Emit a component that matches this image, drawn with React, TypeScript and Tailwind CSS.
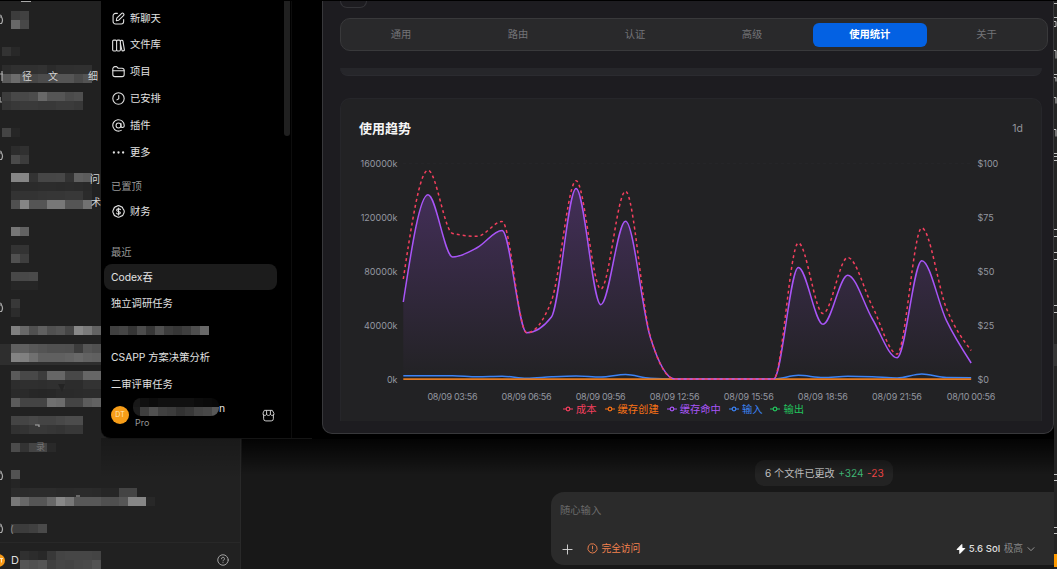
import type { ReactNode } from "react";

type Cells = [row: number, col: number, shades: string];

/* Redaction mosaic: each pair of hex digits is the grey of one 9px cell, ".." leaves a gap. */
const sidebarCells: Cells[] = [
  [1, 1, "3c41"], [2, 1, "6848"], [5, 0, "3328"],
  [7, 0, "2c303030322b2f2f3030"], [8, 0, "5a6c56464c4c55554a53"],
  [10, 0, "3c48484c6855554b4f"], [11, 0, "34383a3a38383b3b38"],
  [14, 0, "4426"], [16, 1, "2c30"], [17, 1, "4a3c"],
  [19, 1, "86863346464733605c"], [20, 1, "2a2b2b2c2c2b2c2b29"], [21, 1, "33333335363638382b"],
  [22, 1, "508555557878555572"],
  [25, 1, "7662"], [27, 1, "3333"], [28, 1, "503e"], [30, 1, "48484a"], [31, 1, "262626"],
  [33, 1, "38"], [34, 1, "2c"],
  [36, 1, "80685060505546887a62"], [38, 1, "6060585450504f3c5550"], [39, 1, "83807060606063686260"],
  [41, 1, "5a48483c666648486666"], [42, 1, "2d2f2f2e30302c2c3333"], [43, 1, "2a2a2726272a2a2b2c2c"],
  [44, 1, "5c444444706c44445c62"], [46, 1, "4444484444484c4c"], [47, 1, "3133383836343838"],
  [49, 1, "4b33444429"], [52, 1, "52"], [53, 1, "25"],
  [54, 1, "2b2b2c2c2c2a2a2b2b2a26264444"], [55, 1, "78685656688878585858504f56868628".slice(0, 26) + "868628"],
  [58, 1, "3c3c404a"], [61, 2, "302c28384446464644"], [62, 2, "555055404644484a52"],
];

function Mosaic({ rows, width, height, x = 0, y = 0 }: { rows: Cells[]; width: number; height: number; x?: number; y?: number }) {
  return (
    <svg width={width} height={height} viewBox={`${x} ${y} ${width} ${height}`} shapeRendering="crispEdges" aria-hidden="true">
      {rows.flatMap(([r, c, shades]) =>
        (shades.match(/../g) ?? []).map((s, i) =>
          s === ".." ? null : (
            <rect key={`${r}-${c + i}`} x={2 + 9 * (c + i)} y={2 + 9 * r} width={9} height={9} fill={`#${s}${s}${s}`} />
          ),
        ),
      )}
    </svg>
  );
}

function Icon({ children, size = 13, stroke = 2 }: { children: ReactNode; size?: number; stroke?: number }) {
  return (
    <svg width={size} height={size} viewBox="0 0 24 24" fill="none" stroke="currentColor" strokeWidth={stroke} strokeLinecap="round" strokeLinejoin="round" className="shrink-0">
      {children}
    </svg>
  );
}

const nav: [string, ReactNode][] = [
  ["新聊天", <><path d="M10 2.500H6.500a4.500 4.500 0 0 0-4.500 4.500v10.500A4.500 4.500 0 0 0 6.500 22h10.500a4.500 4.500 0 0 0 4.500-4.500V14" /><path d="M8 16l.8-4.500 8.700-8.700a2.600 2.600 0 0 1 3.700 3.700L12.500 15.200z" /></>],
  ["文件库", <><rect x="1.200" y="2" width="7.300" height="20" rx="2" /><path d="M8.500 4a2 2 0 0 1 2-2h3a2 2 0 0 1 2 2v16a2 2 0 0 1-2 2h-3a2 2 0 0 1-2-2" /><path d="M15.500 4.500a2 2 0 0 1 1.500-2l1-.1a2 2 0 0 1 2.200 1.600l2.600 15.500a2 2 0 0 1-1.500 2.300l-.8.1a2 2 0 0 1-2.300-1.500L15.500 8" /></>],
  ["项目", <><path d="M1.500 7a4 4 0 0 1 4-4h3l3 3h7a4 4 0 0 1 4 4v7.500a4 4 0 0 1-4 4h-13a4 4 0 0 1-4-4z" /><path d="M1.500 10.500h21" /></>],
  ["已安排", <><circle cx="12" cy="12" r="10.500" /><path d="M12.500 6.500v6l-3.500 2" /></>],
  ["插件", <><circle cx="12" cy="12" r="4.500" /><path d="M16.500 8v5a3 3 0 0 0 6-1A10.500 10.500 0 1 0 17 21" /></>],
  ["更多", <g fill="currentColor" stroke="none"><circle cx="3.500" cy="12" r="2.100" /><circle cx="12" cy="12" r="2.100" /><circle cx="20.500" cy="12" r="2.100" /></g>],
];

function AppSidebar() {
  return (
    <aside className="relative flex h-full w-[241px] shrink-0 flex-col justify-end overflow-hidden border-r border-[#292929] bg-[#212121]">
      <div className="flex h-[27px] items-center justify-between border-t border-[#282828] pr-[11px] pt-[8px] text-[#a0a0a0]">
        <div className="flex items-center">
          <svg width="5" height="13" viewBox="0 0 5 13"><circle cx="-1.500" cy="6.500" r="6.500" fill="#f79a18" /><path d="M0 4.500h3M1.500 4.500v4" stroke="#ffe6bd" /></svg>
          <span className="ml-[6px] text-[11px] text-[#dedede]">D</span>
        </div>
        <Icon size={12}><circle cx="12" cy="12" r="10.500" /><path d="M9 9.500a3 3 0 1 1 4 2.800c-.7.3-1 .7-1 1.500M12 17.300v.2" /></Icon>
      </div>
      <div className="absolute top-[344px] left-0 h-[21px] w-[101px] bg-[#2e2e2e]" />
      <div className="absolute inset-0"><Mosaic rows={sidebarCells} width={241} height={569} /></div>
      <div className="absolute inset-0 text-[10px] leading-[15px] text-[#d4d4d4]">
        <span className="absolute top-[69px] left-[22px] w-[10px]">径</span>
        <span className="absolute top-[69px] left-[48px] w-[10px]">文</span>
        <span className="absolute top-[69px] left-[88px] w-[10px]">细</span>
        <span className="absolute top-[172px] left-[90px] w-[10px]">问</span>
        <span className="absolute top-[195px] left-[91px] w-[10px]">术</span>
        <span className="absolute top-[439px] left-[36px] text-[9px] text-[#777]">录</span>
        <span className="absolute top-[522px] left-[10px] text-[#888]">(</span>
      </div>
      <svg className="absolute inset-0" width="100" height="569" fill="none" stroke="#a8a8a8" strokeWidth="1.200">
        {[20, 156, 308, 476, 529].map((y) => (
          <path key={y} d={`M0 ${y - 3}h1.500q2 3 0 6.500h-1.500M0 ${y - 5}q1.500 0 1.500 2`} />
        ))}
        <path d="M0 74h3M2 71v10M0 97v5h2M21 1.500h10M35 425h4v2M76 496h4" />
        <path d="M58 384h7l-3 8z" fill="#242424" stroke="none" />
      </svg>
    </aside>
  );
}

function Composer() {
  return (
    <main className="flex min-w-0 flex-1 flex-col items-end justify-end bg-[#181818] pr-[3px] pb-[4px]">
      <div className="mr-[161px] flex h-[26px] w-[138px] items-center gap-[3.500px] rounded-[9px] bg-[#232323] pt-[2px] pl-[10px] text-[10.100px] text-[#c6c6c6]">
        <span>6 个文件已更改</span><span className="text-[#40b976]">+324</span><span className="text-[#ee4545]">-23</span>
      </div>
      <div className="mt-[6px] flex h-[73px] w-[503px] flex-col justify-between rounded-l-[13px] bg-[#2b2b2b] pt-[10px] pr-[19px] pb-[8px] pl-[9px]">
        <div className="text-[10.300px] leading-[16px] text-[#6c6c6c]">随心输入</div>
        <div className="flex h-[16px] items-center text-[9.700px]">
          <span className="ml-[2px] flex text-[#dadada]"><Icon size={11}><path d="M12 2v20M2 12h20" /></Icon></span>
          <span className="ml-[14px] flex items-center gap-[3.500px] text-[#f3824f]">
            <Icon size={11}><path d="M9 2h6l6 5 1 7-4 6-6 2-6-2-4-6 1-7zM12 7v6M12 17v.2" /></Icon><span className="pt-px">完全访问</span>
          </span>
          <span className="ml-auto flex items-center text-[#dedede]">
            <svg width="10" height="12" viewBox="0 0 10 12" fill="#fff"><path d="M5.800 1.500L1 6.500h2.800L3.800 10.500 8.800 5.500H6z" stroke="#fff" strokeLinejoin="round" /></svg>
            <span className="ml-[3px] pt-px text-[9.600px] font-medium">5.6 Sol</span>
            <span className="ml-[3.500px] pt-px text-[#858585]">极高</span>
            <span className="ml-[4px] flex text-[#aaa]"><Icon size={8} stroke={2.500}><path d="M3 8l9 9 9-9" /></Icon></span>
          </span>
        </div>
      </div>
    </main>
  );
}

function ChatSidebar() {
  return (
    <aside className="relative h-full w-[191px] shrink-0 border-r border-[#0d0d0d] text-[10.300px] text-[#e2e2e2]">
      <nav className="flex flex-col pt-[4px]">
        {nav.map(([label, icon]) => (
          <div key={label} className="flex h-[26.800px] items-center gap-[5px] pl-[11px]"><Icon>{icon}</Icon>{label}</div>
        ))}
      </nav>
      <div className="mt-[9px] flex h-[24px] items-center pl-[10px] text-[#9a9a9a]">已置顶</div>
      <div className="flex h-[26px] items-center gap-[5px] pl-[11px]">
        <Icon><path d="M8.500 2.500Q12 0 15.500 2.500 20 3 20.700 7.500 24 11 21.700 15.500 21 20 16 21 12 24 8 21 3.500 20.500 3 16 0 12 3 8 3.500 3.500 8.500 2.500zM15.500 8.500c-1-2-7-2-7 1s7 2 7 5-6 3-7.300.500M12 5.500v13" /></Icon>财务
      </div>
      <div className="mt-[16px] flex h-[24px] items-center pl-[10px] text-[#9a9a9a]">最近</div>
      <div className="-mt-px ml-[3px] flex h-[26px] w-[173px] items-center rounded-[8px] bg-[#1c1c1c] pt-px pl-[7px]">Codex吞</div>
      <div className="flex h-[27px] items-center pl-[10px]">独立调研任务</div>
      <div className="flex h-[27px] items-center pl-[9px]">
        <Mosaic rows={[[0, 0, "4045354c36503c363e4e68"]]} x={2} y={2} width={99} height={9} />
      </div>
      <div className="flex h-[27px] items-center pl-[10px]">CSAPP 方案决策分析</div>
      <div className="flex h-[27px] items-center pl-[10px]">二审评审任务</div>
      <div className="flex h-[35px] items-center pl-[10px]">
        <span className="flex size-[18px] items-center justify-center rounded-full bg-[#f79d18] text-[7px] text-[#ffe6bd]">DT</span>
        <div className="-mt-[5px] ml-[4px] flex flex-col">
          <div className="flex h-[18px] items-start">
            <div className="overflow-hidden rounded-[8px]"><Mosaic rows={[[0, 0, "18100c101010100c0a08"], [1, 0, "1c3e50403c3238444858"]]} x={4} y={2} width={86} height={18} /></div>
            <span className="mt-px leading-[18px]">n</span>
          </div>
          <span className="mt-px ml-[2px] text-[9px] leading-[11px] text-[#969696]">Pro</span>
        </div>
        <span className="ml-auto mr-[16px] flex text-[#d0d0d0]">
          <Icon size={13} stroke={1.800}><path d="M3 10v8a4 4 0 0 0 4 4h10a4 4 0 0 0 4-4v-8M5 2.500h14L22 8v1c0 4-6 4-6.500 0 0 4-7 4-7 0C8 13 2 13 2 9V8zM8.500 9V3M15.500 9V3" /></Icon>
        </span>
      </div>
      <div className="absolute top-0 right-px h-[135px] w-[6px] rounded-b-[3px] bg-[#202020]" />
    </aside>
  );
}

/* Series are stored as chart heights, measured down from the top of the plot canvas. */
const hits = [302, 194.700, 257, 247.500, 230.500, 332.800, 317, 188.500, 304.700, 221.300, 337, 379, 379, 379, 379, 379, 267.500, 324.300, 275.300, 319, 357.800, 260.700, 320.700, 363];
const cost = [279, 170.300, 233.500, 236.300, 221.500, 332.800, 301, 180.700, 289, 191.300, 336, 379, 379, 379, 379, 379, 243, 313.500, 257.500, 306.500, 354, 228, 308.500, 350.500];
const input = [375.700, 375.700, 375.800, 376.800, 376.300, 378.300, 376.800, 376, 377, 374.600, 378.300, 379, 379, 379, 379, 379, 375.300, 377.500, 376.300, 376.800, 378, 374, 377.500, 377.700];

const X0 = 403.300;
const STEP = 24.690;

function monotone(ys: number[]) {
  const slopes = ys.slice(1).map((y, i) => (y - ys[i]) / STEP);
  const m = ys.map((_, i) => {
    if (i === 0 || i === ys.length - 1) return 0;
    const a = slopes[i - 1];
    const b = slopes[i];
    return a * b <= 0 ? 0 : Math.sign(a) * Math.min(Math.abs(a), Math.abs(b), Math.abs(a + b) / 4) * 2;
  });
  const n = ys.length - 1;
  m[0] = (3 * slopes[0] - m[1]) / 2;
  m[n] = (3 * slopes[n - 1] - m[n - 1]) / 2;
  let d = `M${X0} ${ys[0]}`;
  for (let i = 0; i < n; i++) {
    const x = X0 + i * STEP;
    const h = STEP / 3;
    d += `C${x + h} ${ys[i] + m[i] * h} ${x + STEP - h} ${ys[i + 1] - m[i + 1] * h} ${x + STEP} ${ys[i + 1]}`;
  }
  return d;
}

const legend = [["成本", "#f43f5e"], ["缓存创建", "#f97316"], ["缓存命中", "#a855f7"], ["输入", "#3b82f6"], ["输出", "#22c55e"]];

function TrendChart() {
  const endX = X0 + STEP * 23;
  return (
    <svg width="702" height="254" viewBox="340 149 702 254" className="block" fontSize="9" fill="#9497a0">
      <defs>
        <linearGradient id="hitFill" gradientUnits="userSpaceOnUse" x1="0" y1="188" x2="0" y2="379">
          <stop offset="0" stopColor="#a855f7" stopOpacity="0.25" />
          <stop offset="1" stopColor="#a855f7" stopOpacity="0" />
        </linearGradient>
      </defs>
      <path d="M403 163.500H971" stroke="#252528" strokeDasharray="3 3" />
      {["160000k", "120000k", "80000k", "40000k", "0k"].map((t, i) => (
        <text key={t} x="397.500" y={166.800 + i * 54} textAnchor="end">{t}</text>
      ))}
      {["$100", "$75", "$50", "$25", "$0"].map((t, i) => (
        <text key={t} x="977.500" y={166.800 + i * 54}>{t}</text>
      ))}
      {["08/09 03:56", "08/09 06:56", "08/09 09:56", "08/09 12:56", "08/09 15:56", "08/09 18:56", "08/09 21:56", "08/10 00:56"].map((t, i) => (
        <text key={t} x={452.500 + i * 74.070} y="400" textAnchor="middle" textLength={i === 7 ? 48.500 : 50}>{t}</text>
      ))}
      <path d={`${monotone(hits)}V379H${X0}Z`} fill="url(#hitFill)" />
      <g fill="none" strokeWidth="1.500">
        <path d={monotone(input)} stroke="#3b82f6" />
        <path d={`M${X0} 379.100H${endX}`} stroke="#e27a22" strokeWidth="1.800" />
        <path d={monotone(hits)} stroke="#a855f7" />
        <path d={monotone(cost)} stroke="#f43f5e" strokeDasharray="3 3" />
      </g>
    </svg>
  );
}

function SettingsPanel() {
  return (
    <section className="relative h-[433px] w-[732px] overflow-hidden rounded-b-[10px] border border-t-0 border-[#38383b] bg-[#1d1c20] px-[17px]">
      <div className="h-[7px] w-[27px] rounded-b-[8px] border border-t-0 border-[#343438]" />
      <div className="mt-[10px] grid h-[33px] w-[708px] grid-cols-6 items-center rounded-[10px] border border-[#39393b] bg-[#29292b] px-[2px] text-center text-[10.300px] text-[#737377]">
        {["通用", "路由", "认证", "高级"].map((t) => <span key={t} className="-ml-px">{t}</span>)}
        <span className="mr-px ml-[1.500px] flex h-[24px] items-center justify-center rounded-[6px] bg-[#0361e3] font-bold text-white">使用统计</span>
        <span>关于</span>
      </div>
      <div className="mt-[17px] h-[8px] w-[702px] rounded-b-[8px] border-b border-[#2b2b30] bg-[#26262a]" />
      <div className="mt-[22px] h-[323px] w-[702px] rounded-t-[10px] border border-b-0 border-[#26262a] bg-[#222224]">
        <div className="-ml-px flex h-[50px] items-end justify-between pr-[18px] pb-[12px] pl-[19px]">
          <h2 className="text-[13px] leading-[18px] font-bold text-[#f5f5f5]">使用趋势</h2>
          <span className="text-[10.500px] leading-[16px] text-[#92949b]">1d</span>
        </div>
        <div className="-ml-px"><TrendChart /></div>
        <div className="-mt-px -ml-px flex justify-center gap-[8px] pr-[14px] text-[10.300px] leading-[14px]">
          {legend.map(([label, color]) => (
            <span key={label} className="flex items-center gap-[3px]" style={{ color }}>
              <svg width="10" height="6" fill="none" stroke="currentColor" strokeWidth="1.200"><path d="M0 3h3M7 3h3" /><circle cx="5" cy="3" r="1.800" /></svg>
              {label}
            </span>
          ))}
        </div>
      </div>
    </section>
  );
}

function EdgeStrip() {
  return (
    <div className="absolute top-0 right-0 h-full w-[3px] overflow-hidden bg-[#242424]">
      <div className="absolute top-[344px] h-[22px] w-full bg-[#363636]" />
      <svg width="3" height="569" stroke="#c4c4c4" strokeWidth="1" className="absolute inset-0">
        <path d="M0 3.500h3M0 17.500h3M0 21.500h2v5H0M0 50.500h2v8M0 74.500h3M0 77.500h2v4M0 97.500h2v6M0 129.500h2v7M0 153.500h3M0 156.500h3M0 160.500h3M0 229.500h3M0 236.500h3M0 252.500h3M0 259.500h3M0 305.500h3M0 312.500h3M0 474.500h3M0 480.500h3M0 527.500h3M0 533.500h3" fill="none" />
      </svg>
      <div className="absolute top-[554px] h-[13px] w-full bg-[#ff9b00]" />
    </div>
  );
}

export default function App() {
  return (
    <div className="relative h-[569px] w-[1057px] overflow-hidden bg-black font-['Inter','Noto_Sans_CJK_SC',sans-serif]">
      <div className="flex h-full"><AppSidebar /><Composer /></div>
      <div className="absolute top-[438px] left-[101px] h-[40px] w-[141px] bg-gradient-to-b from-black/25 to-transparent" />
      <div className="absolute top-[433px] left-[242px] h-[42px] w-[812px] bg-gradient-to-b from-black via-black/50 to-transparent" />
      <div className="absolute top-px left-[101px] flex h-[438px] w-[221px] rounded-bl-[10px] border-b border-[#151515] bg-black"><ChatSidebar /></div>
      <div className="absolute top-0 left-[312px] h-[439px] w-[742px] bg-black" />
      <div className="absolute top-px left-[322px]"><SettingsPanel /></div>
      <EdgeStrip />
      <div className="absolute inset-x-0 top-0 h-px bg-black" />
    </div>
  );
}
